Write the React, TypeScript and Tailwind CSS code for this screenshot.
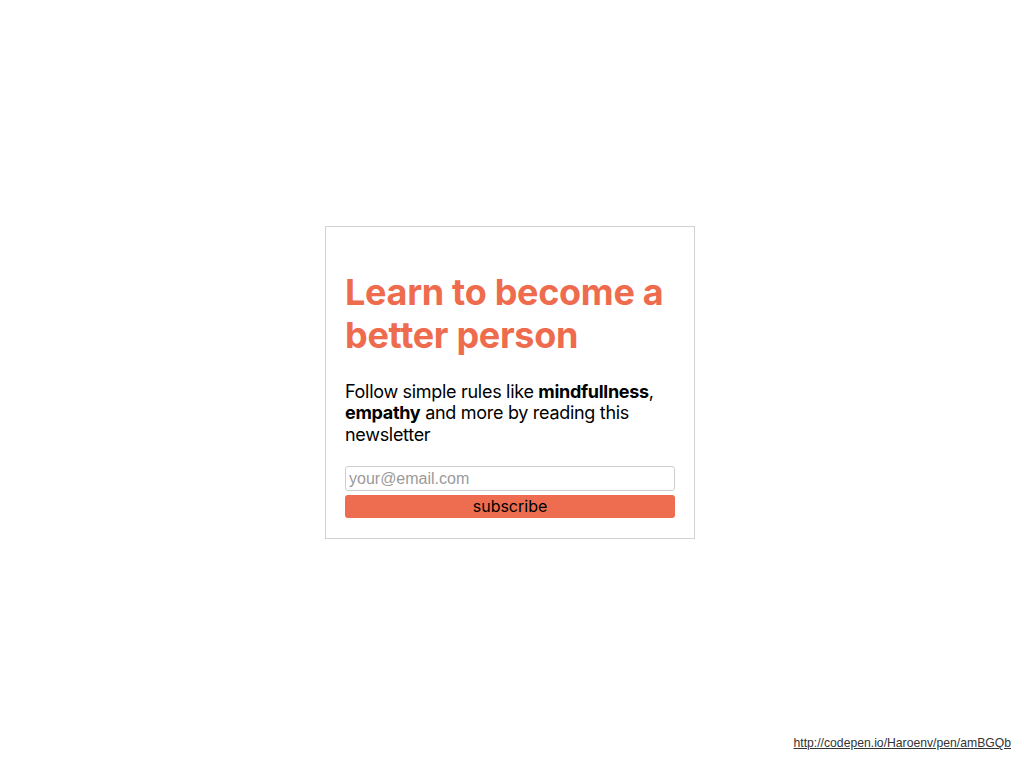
import React from "react";

export default function App() {
  return (
    <div className="w-full h-screen flex flex-col bg-white" style={{ fontFamily: "Inter, 'Noto Sans', sans-serif" }}>
      <main className="flex-1 flex items-center justify-center pt-[29px] pr-[4px]">
        <div className="w-[370px] border border-[#d2d2d2] px-[19px] pt-[19px] pb-[20px] box-border">
          <h1 className="mt-[25px] text-[36px] leading-[43px] font-bold text-[#ee6c4d] tracking-[-0.3px]">
            Learn to become a better person
          </h1>
          <p className="mt-[24px] text-[18px] leading-[21.6px] tracking-[-0.3px] text-black">
            Follow simple rules like <b>mindfullness</b>, <b>empathy</b> and more by reading this newsletter
          </p>
          <form className="mt-[21px] flex flex-col gap-[4px]" onSubmit={(e) => e.preventDefault()}>
            <input
              type="email"
              placeholder="your@email.com"
              className="h-[25px] w-full border border-[#cfcfcf] rounded-[3px] px-[3px] text-[16px] placeholder:text-[#9a9a9a] outline-none"
              style={{ fontFamily: "'Liberation Sans', Arial, sans-serif" }}
            />
            <button
              type="submit"
              className="h-[23px] w-full rounded-[3px] bg-[#ee6d50] text-black text-[16px] leading-[23px]"
            >
              subscribe
            </button>
          </form>
        </div>
      </main>
      <footer className="flex justify-end pr-[13px] pb-[18px]">
        <a
          href="#"
          className="text-[12.2px] leading-[14px] text-[#333] underline"
          style={{ fontFamily: "'Liberation Sans', Arial, sans-serif" }}
        >
          http://codepen.io/Haroenv/pen/amBGQb
        </a>
      </footer>
    </div>
  );
}
